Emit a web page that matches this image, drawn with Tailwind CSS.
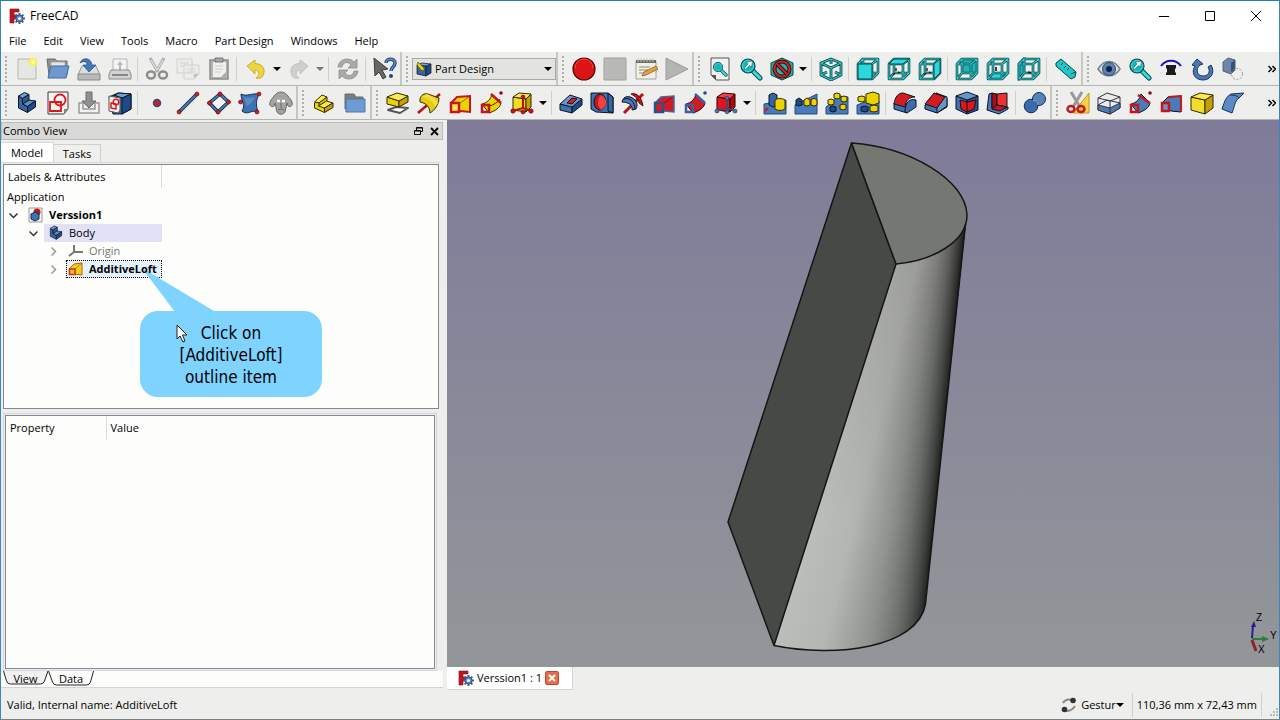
<!DOCTYPE html>
<html lang="en">
<head>
    <meta charset="UTF-8">
    <meta name="viewport" content="width=device-width, initial-scale=1.0">
    <title>FreeCAD</title>
    <script src="https://cdn.jsdelivr.net/npm/@tailwindcss/browser@4"></script>
</head>
<body class="h-screen flex flex-col overflow-hidden bg-[#eeefed] border border-t-[#1883b7] border-x-[#3c86b8] border-b-[#7d8083] text-black text-[11px] leading-4 font-['Open_Sans','Noto_Sans',sans-serif]">

    <!-- Shared shapes -->
    <svg class="hidden" aria-hidden="true">
        <symbol id="logo" viewBox="0 0 16 16">
            <path d="M1 1h9v3H5v3h4v3H5v5H1z" fill="#c4161c" stroke="#7c0c10" stroke-width=".6"/>
            <path d="M10.500 5v11M5 10.500h11M6.600 6.600l7.800 7.800M14.400 6.600l-7.800 7.800" stroke="#3d5f92" stroke-width="2"/>
            <circle cx="10.500" cy="10.500" r="3.600" fill="#5b82ba" stroke="#34558a"/>
            <circle cx="10.500" cy="10.500" r="1.600" fill="#fff"/>
        </symbol>
        <symbol id="frame" viewBox="0 0 24 24">
            <g fill="none" stroke-linejoin="round">
                <path d="M2 7h14v15H2zM7 2h15v14H7zM2 7l5-5M16 7l6-5M16 22l6-6M2 22l5-6" stroke="#0a4648" stroke-width="2.600"/>
                <path d="M2 7h14v15H2zM7 2h15v14H7zM2 7l5-5M16 7l6-5M16 22l6-6M2 22l5-6" stroke="#35c9cb" stroke-width="1.100"/>
            </g>
        </symbol>
        <symbol id="body" viewBox="0 0 24 24">
            <g stroke="#0b1521" stroke-linejoin="round">
                <path d="M3.500 5l4 2.500V13l5 2.500v6l-9-4.500z" fill="#3465a4"/>
                <path d="M3.500 5l6-3.500 4.500 2-6.500 4z" fill="#729fcf"/>
                <path d="M7.500 7.500l6.500-4V9l-6.500 4z" fill="#2d5c9a"/>
                <path d="M7.500 13L14 9l6.500 1-8 5.500z" fill="#5c8cc6"/>
                <path d="M12.500 15.500l8-5.500v6l-8 5.500z" fill="#204a87"/>
            </g>
        </symbol>
        <symbol id="ybody" viewBox="0 0 24 24">
            <g stroke="#302b00" stroke-linejoin="round">
                <path d="M2.500 12l4-1.500 1 3 5 2.500v5.500l-10-4.500z" fill="#edd400"/>
                <path d="M2.500 11L10 4l5 2-7.500 6z" fill="#fce94f"/>
                <path d="M7 12l8-6v4.500l-8 5z" fill="#d9bf00"/>
                <path d="M6.500 15l8-5 6.500 2-8.500 5z" fill="#fce94f"/>
                <path d="M12.500 17l8.500-5v4.500l-8.500 5z" fill="#c4a000"/>
            </g>
        </symbol>
        <symbol id="zoomglass" viewBox="0 0 24 24">
            <path d="M14 14l7 7" stroke="#0a4648" stroke-width="5" stroke-linecap="round"/>
            <path d="M14 14l7 7" stroke="#34e0e2" stroke-width="3" stroke-linecap="round"/>
            <circle cx="9" cy="9" r="7" fill="#16b5b7" stroke="#0a4648" stroke-width="1.200"/>
            <circle cx="9" cy="9" r="5.500" fill="none" stroke="#34e0e2"/>
        </symbol>
        <symbol id="arrowglass" viewBox="0 0 24 24">
            <use href="#zoomglass"/>
            <path d="M5 13l1-3 3-3-1.500-2 6-1-1 6-2-1.500-3 3z" fill="#fff" stroke="#0a4648" stroke-width=".5"/>
        </symbol>
        <symbol id="undoarrow" viewBox="0 0 24 24">
            <path d="M3 9l8-6v3.500c8 0 11 6 8 12-1 3-4 3-7 2.500 4-2 4-8-1-8v4z" fill="currentColor" stroke-width=".8"/>
        </symbol>
    </svg>

    <header>
        <div class="flex items-center justify-between bg-white h-[29px]">
            <div class="flex items-center gap-[5px] pl-2 text-[12px]">
                <svg class="size-4"><use href="#logo"/></svg>
                <h1>FreeCAD</h1>
            </div>
            <div class="flex [&>button]:w-[46px] [&>button]:h-7 [&>button]:grid [&>button]:place-items-center [&_svg]:size-3">
                <button aria-label="Minimize"><svg viewBox="0 0 12 12"><path d="M1 6.500h10" stroke="#000"/></svg></button>
                <button aria-label="Maximize"><svg viewBox="0 0 12 12"><path d="M1.500 1.500h9v9h-9z" fill="none" stroke="#000"/></svg></button>
                <button aria-label="Close"><svg viewBox="0 0 12 12"><path d="M1 1l10 10M11 1L1 11" stroke="#000"/></svg></button>
            </div>
        </div>
        <nav class="flex items-center gap-[17px] bg-white h-[22px] pl-2">
            <button>File</button>
            <button>Edit</button>
            <button>View</button>
            <button>Tools</button>
            <button>Macro</button>
            <button>Part Design</button>
            <button>Windows</button>
            <button>Help</button>
        </nav>
    </header>

    <!-- Toolbars: hr = separator, i = grip, data-menu = drop-down arrow -->
    <div class="flex flex-col shrink-0 [&>div]:flex [&>div]:h-[34px] [&>div]:border-b [&>div]:border-[#b4b5b3] [&_section]:flex [&_section]:items-center [&_section]:border-r-2 [&_section]:border-r-[#c6c7c5] [&_section>button]:w-[31px] [&_section>button]:h-8 [&_section>button]:grid [&_section>button]:place-items-center [&_section>button>svg]:size-6 [&_section>button[data-menu]]:w-3 [&_section>button[data-menu]>svg]:w-2 [&_section>button[data-menu]>svg]:h-1 [&_hr]:w-px [&_hr]:h-6 [&_hr]:ml-[2px] [&_hr]:mr-[3px] [&_hr]:border-0 [&_hr]:bg-[#d0d1cf] [&_i]:w-[2px] [&_i]:h-[26px] [&_i]:mx-1 [&_i]:bg-[repeating-linear-gradient(#b0b1af_0_2px,transparent_2px_4px)]">
        <div>
            <section aria-label="File">
                <i></i>
                <button aria-label="New"><svg viewBox="0 0 24 24"><path d="M3 2h18v20H3z" fill="#e6e6e2" stroke="#b5b6b2"/><circle cx="18" cy="5" r="4.500" fill="#f7ee6a"/><circle cx="18" cy="5" r="2" fill="#fffb9a"/></svg></button>
                <button aria-label="Open"><svg viewBox="0 0 24 24"><path d="M1 2h8l2 2h10v14H3z" fill="#8e908d" stroke="#6a6c69"/><path d="M5 5h14v8H5z" fill="#e6e6e6" stroke="#aaa"/><path d="M5 9h18l-3 12H2z" fill="#6d99cf" stroke="#3f6ca6"/></svg></button>
                <button aria-label="Save"><svg viewBox="0 0 24 24"><path d="M5 9h14l4 9H1z" fill="#dcdddb" stroke="#999"/><path d="M1 17h22v6H1z" fill="#b9bab8" stroke="#888"/><path d="M3 6c2-6 11-6 12 2h4l-7 7-6-7h4c0-4-4-4-7-2z" fill="#4377b5" stroke="#204a87" stroke-width=".7"/></svg></button>
                <button aria-label="Print"><svg viewBox="0 0 24 24"><path d="M5 2h14v13H5z" fill="#f3f3f3" stroke="#b5b5b5"/><path d="M12 4l3 4h-2v5h-2V8H9z" fill="#b8b8b8"/><path d="M3 13h18l2 4v5H1v-5z" fill="#d2d3d1" stroke="#8a8a8a"/><path d="M4 18h16" stroke="#6e6e6e" stroke-width="1.500"/></svg></button>
                <hr>
                <button aria-label="Cut"><svg viewBox="0 0 24 24" fill="none"><path d="M5 1l8 14M19 1l-8 14" stroke="#aeb0ad" stroke-width="3"/><path d="M6 3l6 10M18 3l-6 10" stroke="#ededed"/><ellipse cx="6" cy="18" rx="4" ry="3.500" stroke="#8d8f8c" stroke-width="2.500"/><ellipse cx="18" cy="18" rx="4" ry="3.500" stroke="#8d8f8c" stroke-width="2.500"/></svg></button>
                <button aria-label="Copy"><svg viewBox="0 0 24 24" fill="#ececea" stroke="#d2d3d1"><path d="M1 2h15v14H1zM8 8h15v9l-5 5H8z"/><path d="M11 12h9M11 15h9M4 6h9M4 9h3" /><path d="M23 17h-5v5z" fill="#bbb"/></svg></button>
                <button aria-label="Paste"><svg viewBox="0 0 24 24"><path d="M3 3h18v19H3z" fill="#b3b4b2" stroke="#8d8e8c" stroke-width="1.500"/><path d="M6 5h13v15H6z" fill="#efefed"/><path d="M8 1h8v4H8z" fill="#a6a7a5" stroke="#777"/><path d="M8 9h8M8 12h8M8 15h6" stroke="#ccc"/><path d="M19 15l-5 5h5z" fill="#aaa"/></svg></button>
                <hr>
                <button aria-label="Undo"><svg class="text-[#edd540]" stroke="#bfa21a"><use href="#undoarrow"/></svg></button>
                <button data-menu aria-label="Undo list"><svg viewBox="0 0 8 4"><path d="M0 0h8L4 4z"/></svg></button>
                <button aria-label="Redo"><svg class="text-[#cfd0ce] -scale-x-100" stroke="#b9bab8"><use href="#undoarrow"/></svg></button>
                <button data-menu aria-label="Redo list"><svg viewBox="0 0 8 4"><path d="M0 0h8L4 4z" fill="#777"/></svg></button>
                <hr>
                <button aria-label="Refresh"><svg viewBox="0 0 24 24" fill="#a9aba8" stroke="#8c8e8b" stroke-width=".8"><path d="M2 10C3 1 14 0 18 5l3-3v9h-9l3-3c-3-4-8-3-9 2z"/><path d="M22 14c-1 9-12 10-16 5l-3 3v-9h9l-3 3c3 4 8 3 9-2z"/></svg></button>
                <hr>
                <button aria-label="What's this?"><svg viewBox="0 0 24 24"><path d="M1 1l14 11-6 1 4 7-3 2-4-7-4 4z" fill="#666866" stroke="#3c3e3c"/><path d="M13 6c0-5 9-5 9 0 0 4-4 4-4 8" fill="none" stroke="#204a87" stroke-width="3.500"/><path d="M13 6c0-5 9-5 9 0 0 4-4 4-4 8" fill="none" stroke="#5c8cc6" stroke-width="1.500"/><circle cx="18" cy="19" r="2" fill="#204a87"/></svg></button>
            </section>
            <section aria-label="Workbench">
                <i></i>
                <label class="relative w-36">
                    <span class="sr-only">Workbench</span>
                    <select class="block w-full h-[22px] appearance-none border border-[#a9aaa8] bg-[#e3e4e2] pl-[22px] pr-4 py-0 leading-5">
                        <option>Part Design</option>
                    </select>
                    <svg class="absolute left-1 top-[3px] size-4 pointer-events-none" viewBox="0 0 16 16"><path d="M1 4l9 1v10l-9-2z" fill="#3465a4" stroke="#0b1521" stroke-width=".7"/><path d="M10 5l5-2v9l-5 3z" fill="#204a87" stroke="#0b1521" stroke-width=".7"/><path d="M1 4l5-2 9 1-5 2z" fill="#729fcf" stroke="#0b1521" stroke-width=".7"/><path d="M2 1l6 6v3L5 9 1 4z" fill="#edd400" stroke="#5a5000" stroke-width=".7"/></svg>
                    <svg class="absolute right-1 top-[9px] w-2 h-1 pointer-events-none" viewBox="0 0 8 4"><path d="M0 0h8L4 4z"/></svg>
                </label>
            </section>
            <section aria-label="Macro">
                <i></i>
                <button aria-label="Record macro"><svg viewBox="0 0 24 24"><circle cx="12" cy="12" r="11" fill="#dc1417" stroke="#5c0606" stroke-width="1.200"/><path d="M3 11a9 9 0 0118 0" fill="none" stroke="#f04a4a"/></svg></button>
                <button aria-label="Stop macro"><svg viewBox="0 0 24 24"><path d="M1 1h22v22H1z" fill="#b9bab8" stroke="#a0a19f"/></svg></button>
                <button aria-label="Edit macros"><svg viewBox="0 0 24 24"><path d="M2 4h20v18H2z" fill="#f2f0e4" stroke="#a3a19a"/><path d="M2 3h20v3H2z" fill="#6d6a60"/><path d="M4 1v4M7 1v4M10 1v4M13 1v4M16 1v4M19 1v4" stroke="#c9c7bf"/><path d="M5 10h11M5 13h9M5 16h6" stroke="#8a8982"/><path d="M22 9l2 3-12 6-4 1 2-4z" fill="#e8a33d" stroke="#7a4a10" stroke-width=".7"/></svg></button>
                <button aria-label="Run macro"><svg viewBox="0 0 24 24"><path d="M1 1l22 11L1 23z" fill="#b4b5b3" stroke="#9c9d9b"/></svg></button>
            </section>
            <section aria-label="View">
                <i></i>
                <button aria-label="Fit all"><svg viewBox="0 0 24 24"><path d="M3 1h18v22H8l-5-5z" fill="#f2f2f0" stroke="#555"/><path d="M3 18h5v5z" fill="#555"/><use href="#zoomglass" x="4" y="4" width="16" height="16"/></svg></button>
                <button aria-label="Fit selection"><svg viewBox="0 0 24 24"><use href="#arrowglass"/></svg></button>
                <button aria-label="Draw style"><svg viewBox="0 0 24 24"><path d="M12 1l11 5v12l-11 5-11-5V6z" fill="#16b5b7" stroke="#0a4648"/><circle cx="12" cy="12" r="7.500" fill="none" stroke="#3a0a0a" stroke-width="4"/><circle cx="12" cy="12" r="7.500" fill="none" stroke="#cc2222" stroke-width="2.200"/><path d="M7 7l10 10" stroke="#3a0a0a" stroke-width="4"/><path d="M7 7l10 10" stroke="#cc2222" stroke-width="2.200"/></svg></button>
                <button data-menu aria-label="Draw styles"><svg viewBox="0 0 8 4"><path d="M0 0h8L4 4z"/></svg></button>
                <hr>
                <button aria-label="Isometric"><svg viewBox="0 0 24 24" fill="none" stroke-linejoin="round"><path d="M12 2l10 4v12l-10 5-10-5V6zM2 6l10 5 10-5M12 11v12M12 2v5M2 18l6-3M22 18l-6-3" stroke="#0a4648" stroke-width="2.800"/><path d="M12 2l10 4v12l-10 5-10-5V6zM2 6l10 5 10-5M12 11v12M12 2v5M2 18l6-3M22 18l-6-3" stroke="#35c9cb" stroke-width="1.100"/></svg></button>
                <hr>
                <button aria-label="Front"><svg viewBox="0 0 24 24"><use href="#frame"/><path d="M2 7h14v15H2z" fill="#2bd9dc" stroke="#0a4648"/></svg></button>
                <button aria-label="Top"><svg viewBox="0 0 24 24"><use href="#frame"/><path d="M2 7l5-5h15l-6 5z" fill="#2bd9dc" stroke="#0a4648"/><path d="M9 11v3M8 16l-2 2M11 15l2 1" stroke="#111" stroke-width="1.300"/></svg></button>
                <button aria-label="Right"><svg viewBox="0 0 24 24"><use href="#frame"/><path d="M16 7l6-5v14l-6 6z" fill="#2bd9dc" stroke="#0a4648"/><path d="M9 11v3M8 16l-2 2M11 15l2 1" stroke="#111" stroke-width="1.300"/></svg></button>
                <hr>
                <button aria-label="Rear"><svg viewBox="0 0 24 24"><path d="M7 3h14v13H7z" fill="#1cb6b9"/><use href="#frame"/></svg></button>
                <button aria-label="Bottom"><svg viewBox="0 0 24 24"><path d="M2 22l5-6h15l-6 6z" fill="#2bd9dc"/><use href="#frame"/><path d="M10 10v4" stroke="#111" stroke-width="1.600"/></svg></button>
                <button aria-label="Left"><svg viewBox="0 0 24 24"><path d="M2 7l5-5v14l-5 6z" fill="#1cb6b9" stroke="#1cb6b9" stroke-width="3"/><use href="#frame"/><path d="M11 15l3 1" stroke="#111" stroke-width="1.600"/></svg></button>
                <hr>
                <button aria-label="Measure"><svg viewBox="0 0 24 24"><path d="M2 6l5-4 15 13-1 5-4 2L2 9z" fill="#22c7ca" stroke="#0a4648"/><path d="M17 17l5-2M7 8l2-2M10 11l2-2M13 13l2-2" stroke="#0a4648"/></svg></button>
            </section>
            <section class="flex-1 pr-px !border-r-0" aria-label="Visibility">
                <i></i>
                <button aria-label="Toggle visibility"><svg viewBox="0 0 24 24"><path d="M1 12c6-10 16-10 22 0-6 9-16 9-22 0z" fill="#dfe3e6" stroke="#7c8084" stroke-width="1.500"/><circle cx="12" cy="12" r="6.500" fill="#5b82b4" stroke="#2b4a78"/><circle cx="12" cy="12" r="3" fill="#142238"/></svg></button>
                <button aria-label="Zoom to selection"><svg viewBox="0 0 24 24"><use href="#arrowglass"/></svg></button>
                <button aria-label="Turntable"><svg viewBox="0 0 24 24"><path d="M2 9c5-7 15-7 20 0" fill="none" stroke="#1a12b8" stroke-width="2"/><path d="M7 8h10v3l-1 1v3l1 1v2H7v-2l1-1v-3l-1-1z" fill="#1c1c1c"/></svg></button>
                <button aria-label="Rotate"><svg viewBox="0 0 24 24"><path d="M2 8l5-6 6 5-3 1c-5 4-3 11 3 11 5 0 8-4 5-9l3-2c5 8-1 15-8 15C4 23 1 15 5 9z" fill="#4a78b4" stroke="#1a355e"/></svg></button>
                <button aria-label="Clipping"><svg viewBox="0 0 24 24"><path d="M2 5l5-4 7 2v10l-4 4-8-3z" fill="#6b86ad" stroke="#59626e"/><path d="M10 6l4-3v10l-4 4z" fill="#39506f"/><circle cx="16" cy="17" r="5.500" fill="none" stroke="#999" stroke-dasharray="2 1.500"/></svg></button>
                <button class="ml-auto !w-3" aria-label="More"><svg class="!size-2" viewBox="0 0 8 8"><path d="M.500 1l3 3-3 3M4.500 1l3 3-3 3" fill="none" stroke="#000" stroke-width="1.500"/></svg></button>
            </section>
        </div>
        <div>
            <section aria-label="Part Design Helper">
                <i></i>
                <button aria-label="Create body"><svg viewBox="0 0 24 24"><use href="#body"/></svg></button>
                <button aria-label="Create sketch"><svg viewBox="0 0 24 24"><path d="M2 1h20v17l-4 5H2z" fill="#f3f3f1" stroke="#3a3a3a"/><path d="M22 18h-4v5z" fill="#888"/><g fill="none" stroke="#e0161a" stroke-width="1.800"><path d="M4 11h11v9H4z"/><circle cx="14" cy="9" r="5.500"/></g></svg></button>
                <button aria-label="Edit sketch"><svg viewBox="0 0 24 24"><path d="M2 12h4v6h12v-6h4v10H2z" fill="#f2f2f2" stroke="#999" stroke-width="1.500"/><path d="M9 1h6v9h4l-7 7-7-7h4z" fill="#8e908d" stroke="#6a6c69"/></svg></button>
                <button aria-label="Map sketch"><svg viewBox="0 0 24 24" stroke-linejoin="round"><path d="M1 6l9-4 13 1v15l-9 5H5z" fill="#3465a4" stroke="#0b1521"/><path d="M14 7l9-4v15l-9 5z" fill="#204a87" stroke="#0b1521"/><path d="M6 4l5-2 12 1-9 4z" fill="#729fcf" stroke="#0b1521"/><path d="M1 5l11 2v12l-2 3-9-2z" fill="#f3f3f1" stroke="#555"/><g fill="none" stroke="#e0161a" stroke-width="1.500"><path d="M3 12l5 1v5l-5-1z"/><circle cx="8" cy="11" r="2.800"/></g></svg></button>
                <hr>
                <button aria-label="Datum point"><svg viewBox="0 0 24 24"><circle cx="12" cy="12" r="3.500" fill="#d41c20" stroke="#29508a" stroke-width="1.500"/></svg></button>
                <button aria-label="Datum line"><svg viewBox="0 0 24 24"><path d="M3 21L21 3" stroke="#122440" stroke-width="3.500"/><path d="M3 21L21 3" stroke="#4a7ab8" stroke-width="1.800"/><g fill="#d41c20" stroke="#6a0808" stroke-width=".6"><circle cx="3" cy="21" r="2"/><circle cx="21" cy="3" r="2"/></g></svg></button>
                <button aria-label="Datum plane"><svg viewBox="0 0 24 24"><path d="M13 3l8.500 8-10.500 10-8.500-9z" fill="#f5f6f8" stroke="#122440" stroke-width="3.500"/><path d="M13 3l8.500 8-10.500 10-8.500-9z" fill="none" stroke="#4a7ab8" stroke-width="1.800"/><g fill="#d41c20" stroke="#6a0808" stroke-width=".6"><circle cx="13" cy="3" r="2"/><circle cx="21.500" cy="11" r="2"/><circle cx="11" cy="21" r="2"/><circle cx="2.500" cy="12" r="2"/></g></svg></button>
                <button aria-label="Shape binder"><svg viewBox="0 0 24 24"><path d="M3 3c6 3 10-1 18 0-2 5-4 9-1 18-7-3-10 4-16-1 4-6-1-10-1-17z" fill="#3f72b0" stroke="#142e55"/><path d="M6 6c4 2 8 0 11 0-2 5-5 8-9 9 0-4-1-6-2-9z" fill="#5a8ac4"/><g fill="#d41c20" stroke="#6a0808" stroke-width=".6"><circle cx="21" cy="3" r="2"/><circle cx="2.500" cy="11" r="2"/><circle cx="19" cy="21" r="2"/></g></svg></button>
                <button aria-label="Clone"><svg viewBox="0 0 24 24" stroke="#6b6b69"><path d="M6 4c3-4 9-4 12 0l4 5c3 5 0 8-3 6l-1-3-2 9c-2 3-6 3-8 0l-2-9-1 3c-3 2-6-1-3-6z" fill="#a3a5a2"/><path d="M8 10h3M13 10h3" stroke="#fff" stroke-width="2.500"/><path d="M12 12v5M9 19l3-1 3 1" fill="none"/></svg></button>
            </section>
            <section aria-label="Structure">
                <i></i>
                <button aria-label="Part"><svg viewBox="0 0 24 24"><use href="#ybody"/></svg></button>
                <button aria-label="Group"><svg viewBox="0 0 24 24"><path d="M2 3h9l2 3h7v12H2z" fill="#7c7e7c" stroke="#6b6d6a"/><path d="M3 8h19v13H3z" fill="#6d9bd2" stroke="#4a76ae"/></svg></button>
            </section>
            <section aria-label="Part Design Modeling">
                <i></i>
                <button aria-label="Pad"><svg viewBox="0 0 24 24" stroke-linejoin="round"><path d="M2 19l8-3 12 1-8 5z" fill="#fff" stroke="#555" stroke-width="2"/><path d="M1 6v7l12 3v-6z" fill="#edd400" stroke="#302b00"/><path d="M13 10l9-5v6l-9 5z" fill="#c4a000" stroke="#302b00"/><path d="M1 6l10-4 11 3-9 5z" fill="#fce94f" stroke="#302b00"/></svg></button>
                <button aria-label="Revolution"><svg viewBox="0 0 24 24"><path d="M1 22L23 3" stroke="#b31217" stroke-width="2.500"/><path d="M3 8c1-4 4-6 8-5l11 4c0 6-4 12-9 15 0-6-4-10-10-11z" fill="#e3cb10" stroke="#302b00"/><path d="M5 6c6 1 12 5 13 10l3-4c-2-4-6-7-11-9z" fill="#f4df3a"/></svg></button>
                <button aria-label="Additive loft"><svg viewBox="0 0 24 24"><path d="M3 12l6-6 13-1v16l-10-1z" fill="#edd400"/><path d="M11 13l11-8" stroke="#8a7800"/><path d="M3 12l6-6 13-1v16l-10-1" fill="none" stroke="#c4161c" stroke-width="2"/><path d="M3 12h8v9H3z" fill="#fce94f" stroke="#c4161c" stroke-width="2.500"/></svg></button>
                <button aria-label="Additive pipe"><svg viewBox="0 0 24 24"><path d="M3 13c5-1 9-5 10-10l9 9c-1 5-6 8-12 10z" fill="#edd400" stroke="#302b00"/><path d="M10 15c5-1 9-4 11-7" fill="none" stroke="#302b00"/><path d="M3 14h7v7H3zM12 3l10 9" fill="none" stroke="#c4161c" stroke-width="2.500"/><circle cx="22" cy="2" r="1.800" fill="#8a0f14"/></svg></button>
                <button aria-label="Additive primitive"><svg viewBox="0 0 24 24"><path d="M3 6l13 2v13L3 19z" fill="#f2dd20" stroke="#302b00"/><path d="M16 8l5-5v13l-5 5z" fill="#c4a000" stroke="#302b00"/><path d="M3 6l6-4 12 1-5 5z" fill="#fce94f" stroke="#302b00"/><path d="M13 6v11L3 20M13 17l8 3" fill="none" stroke="#b31217" stroke-width="2"/><g fill="#c4161c" stroke="#5c0606" stroke-width=".6"><circle cx="13" cy="6" r="2"/><circle cx="3" cy="20" r="2.200"/><circle cx="13" cy="21" r="2"/><circle cx="21" cy="20" r="2.200"/></g></svg></button>
                <button data-menu aria-label="Additive primitives"><svg viewBox="0 0 8 4"><path d="M0 0h8L4 4z"/></svg></button>
                <hr>
                <button aria-label="Pocket"><svg viewBox="0 0 24 24" stroke="#0b1521" stroke-linejoin="round"><path d="M1 13v6l12 3v-6z" fill="#3f72b0"/><path d="M13 16l10-8v6l-10 8z" fill="#204a87"/><path d="M1 13L11 4l12 4-10 8z" fill="#6795cb"/><path d="M8 12l5-5 5 1-5 5z" fill="#e0161a"/></svg></button>
                <button aria-label="Hole"><svg viewBox="0 0 24 24" stroke="#0b1521"><path d="M1 2h17l5 4v16l-17-1-5-3z" fill="#3f72b0"/><path d="M18 2l5 4v16l-5-2z" fill="#3465a4"/><ellipse cx="10" cy="11" rx="6" ry="8" fill="#c4161c"/><path d="M11 4c7 3 7 12 0 15-4-4-4-11 0-15z" fill="#ef4343" stroke="none"/></svg></button>
                <button aria-label="Groove"><svg viewBox="0 0 24 24"><path d="M3 22L22 3" stroke="#b31217" stroke-width="3"/><path d="M10 3c6-2 11 4 12 12l-4-3c-1-4-3-6-8-9z" fill="#c4161c" stroke="#300" stroke-width=".8"/><path d="M1 11C2 5 8 4 13 8c3 3 4 6 2 10l-4 1c1-5-4-8-10-8z" fill="#4a7ab8" stroke="#0b1521"/><path d="M3 8c6-2 11 3 11 10" fill="none" stroke="#0b1521"/></svg></button>
                <button aria-label="Subtractive loft"><svg viewBox="0 0 24 24"><path d="M3 12l6-6 13-1v16l-10-1z" fill="#d41c20"/><path d="M11 13l11-8" stroke="#7a0c10"/><path d="M3 12l6-6 13-1v16l-10-1" fill="none" stroke="#4668a0" stroke-width="1.500"/><path d="M3 12h8v9H3z" fill="#d41c20" stroke="#29508a" stroke-width="2.500"/></svg></button>
                <button aria-label="Subtractive pipe"><svg viewBox="0 0 24 24"><path d="M3 13c5-1 9-5 10-10l9 9c-1 5-6 8-12 10z" fill="#d41c20" stroke="#300"/><path d="M3 14h7v7H3zM12 3l10 9" fill="none" stroke="#3a62a0" stroke-width="2.500"/><circle cx="22" cy="2" r="1.800" fill="#29508a"/></svg></button>
                <button aria-label="Subtractive primitive"><svg viewBox="0 0 24 24"><path d="M3 6l13 2v13L3 19z" fill="#e0161a" stroke="#300"/><path d="M16 8l5-5v13l-5 5z" fill="#a80f14" stroke="#300"/><path d="M3 6l6-4 12 1-5 5z" fill="#ef4343" stroke="#300"/><path d="M13 8v9L3 20M13 17l8 3" fill="none" stroke="#29508a" stroke-width="1.500"/><g fill="#4a7ab8" stroke="#142e55" stroke-width=".6"><circle cx="13" cy="7" r="1.800"/><circle cx="3" cy="20" r="2"/><circle cx="13" cy="21" r="1.800"/><circle cx="21" cy="20" r="2"/></g></svg></button>
                <button data-menu aria-label="Subtractive primitives"><svg viewBox="0 0 8 4"><path d="M0 0h8L4 4z"/></svg></button>
                <hr>
                <button aria-label="Mirrored"><svg viewBox="0 0 24 24"><path d="M1 13l22-4v14H1z" fill="#4a7ab8" stroke="#204a87"/><path d="M6 4l4-2 4 2v10l-4 2-4-2z" fill="#3465a4" stroke="#0b1521"/><path d="M12 9c3-2 7-2 10 0v9c-3 2-7 2-10 0z" fill="#edd400" stroke="#302b00"/><path d="M2 20l3-3" stroke="#c4161c" stroke-width="2"/></svg></button>
                <button aria-label="Linear pattern"><svg viewBox="0 0 24 24"><path d="M1 14L23 3v20H1z" fill="#4a7ab8" stroke="#204a87"/><path d="M2 9l3-2 3 2v5l-3 1-3-1z" fill="#204a87" stroke="#0b1521"/><path d="M10 9l3-2 3 2v5l-3 1-3-1zM17 9l3-2 3 2v5l-3 1-3-1z" fill="#edd400" stroke="#302b00"/></svg></button>
                <button aria-label="Polar pattern"><svg viewBox="0 0 24 24"><path d="M1 16L14 5l9 1v17H1z" fill="#4a7ab8" stroke="#204a87"/><g fill="#edd400" stroke="#302b00"><path d="M9 3l3-1 3 1v4l-3 1-3-1zM16 6l3-1 3 1v4l-3 1-3-1zM15 14l3-1 3 1v4l-3 1-3-1zM3 9l3-1 3 1v4l-3 1-3-1z"/></g><path d="M5 16l3-1 3 1v4l-3 1-3-1z" fill="#204a87" stroke="#0b1521"/></svg></button>
                <button aria-label="Multi transform"><svg viewBox="0 0 24 24"><path d="M1 14L14 9l9 1v13H1z" fill="#4a7ab8" stroke="#204a87"/><g fill="#edd400" stroke="#302b00"><path d="M10 3l7-2 6 2v9l-6 2-7-2zM2 6l4-1 3 1v4l-3 1-4-1zM14 15l4-1 4 1v5l-4 1-4-1z"/></g><path d="M5 16l4-1 3 1v4l-3 1-4-1z" fill="#204a87" stroke="#0b1521"/></svg></button>
                <hr>
                <button aria-label="Fillet"><svg viewBox="0 0 24 24" stroke="#0b1521" stroke-linejoin="round"><path d="M1 12v6l13 4v-9z" fill="#3f72b0"/><path d="M12 21c0-9 4-14 11-12v7l-9 6z" fill="#3f6cab"/><path d="M1 13C2 6 5 2 10 2l12 4c-6 0-9 3-10 10z" fill="#d41c20"/></svg></button>
                <button aria-label="Chamfer"><svg viewBox="0 0 24 24" stroke="#0b1521" stroke-linejoin="round"><path d="M1 14v4l12 4 10-6V8L12 3z" fill="#3f72b0"/><path d="M12 2l11 4v9l-10 7v-5l7-11z" fill="#6795cb"/><path d="M1 13L10 2l11 4-8 11z" fill="#d41c20"/></svg></button>
                <button aria-label="Draft"><svg viewBox="0 0 24 24" stroke="#0b1521" stroke-linejoin="round"><path d="M1 5v13l11 5V9z" fill="#3f72b0"/><path d="M12 9l11-4v14l-11 4z" fill="#29508a"/><path d="M1 5l11-4 11 4-11 4z" fill="#6795cb"/><path d="M5 9l7 2 9-2-2 9-7 3-6-3z" fill="#e0161a"/><path d="M12 11v10"/></svg></button>
                <button aria-label="Thickness"><svg viewBox="0 0 24 24" stroke="#0b1521" stroke-linejoin="round"><path d="M3 3l3-1v15l8 2 8-3v2l-9 5-12-4z" fill="#4a7ab8"/><path d="M6 2l5 1v11l-5 4z" fill="#a80f14"/><path d="M11 3l10-1v14l-10-2z" fill="#ef3030"/><path d="M6 18l5-4 10 2-7 4z" fill="#c4161c"/></svg></button>
                <hr>
                <button aria-label="Boolean"><svg viewBox="0 0 24 24" stroke="#142e55"><circle cx="16" cy="8" r="6.500" fill="#5583bd"/><circle cx="8" cy="15" r="6.800" fill="#3a6aaa"/><path d="M10 9c3 0 5 3 5 5" stroke="#9bbbe2" fill="none"/></svg></button>
            </section>
            <section class="flex-1 pr-px !border-r-0" aria-label="Part">
                <i></i>
                <button aria-label="Section cut"><svg viewBox="0 0 24 24"><path d="M23 2v20H7z" fill="#f3d24a" stroke="#c09a1a"/><path d="M5 1l9 15M16 1L7 16" stroke="#999" stroke-width="3"/><g fill="none" stroke="#c4161c" stroke-width="2.500"><ellipse cx="5" cy="18" rx="3.500" ry="3"/><ellipse cx="15" cy="18" rx="3.500" ry="3"/></g></svg></button>
                <button aria-label="Cross-sections"><svg viewBox="0 0 24 24" fill="#e9ecef" stroke="#333"><path d="M1 7l9-5 13 4v11l-10 6-12-4z"/><path d="M1 14l12 3 10-5v5l-10 6-12-4z" fill="#4a7ab8"/><path d="M1 7l12 3 10-4M13 10v13M1 14l9-5 13 3" fill="none"/></svg></button>
                <button aria-label="Sweep"><svg viewBox="0 0 24 24"><path d="M3 13c5-1 9-5 10-10l9 9c-1 5-6 8-12 10z" fill="#4a7ab8" stroke="#0b1521"/><path d="M3 14h7v7H3zM10 4l12 8" fill="none" stroke="#c4161c" stroke-width="2.500"/><circle cx="22" cy="2" r="1.800" fill="#8a0f14"/></svg></button>
                <button aria-label="Loft"><svg viewBox="0 0 24 24"><path d="M3 12l6-6 13-1v16l-10-1z" fill="#4a7ab8" stroke="#0b1521"/><path d="M9 6l13-1v16" fill="none" stroke="#c4161c" stroke-width="2"/><path d="M3 12h7v8H3z" fill="#6795cb" stroke="#c4161c" stroke-width="2.500"/></svg></button>
                <button aria-label="Box"><svg viewBox="0 0 24 24" stroke="#302b00" stroke-linejoin="round"><path d="M1 6l14 3v14L1 19z" fill="#f0de2a"/><path d="M15 9l8-5v13l-8 6z" fill="#c4a000"/><path d="M1 6l9-4 13 2-8 5z" fill="#fce94f"/></svg></button>
                <button aria-label="Face"><svg viewBox="0 0 24 24"><path d="M10 3l13-1-5 5c-5 4-4 8-7 15L1 18C4 9 5 6 10 3z" fill="#5b8bc4" stroke="#142e55"/><path d="M9 4c4 0 8 1 9 3" fill="none" stroke="#142e55"/></svg></button>
                <button class="ml-auto !w-3" aria-label="More"><svg class="!size-2" viewBox="0 0 8 8"><path d="M.500 1l3 3-3 3M4.500 1l3 3-3 3" fill="none" stroke="#000" stroke-width="1.500"/></svg></button>
            </section>
        </div>
    </div>

    <main class="flex-1 min-h-0 flex">
        <aside class="relative w-[446px] shrink-0 flex flex-col pt-[2px]">
            <div class="flex items-center justify-between w-[442px] h-[18px] bg-[#d9dad8] border border-[#bcbdbb] pl-px pr-[2px]">
                <h2>Combo View</h2>
                <div class="flex gap-1 [&>button]:size-3 [&>button]:grid [&>button]:place-items-center">
                    <button aria-label="Float"><svg class="size-[9px]" viewBox="0 0 9 9" fill="none" stroke="#000"><path d="M2.500 3V.500h6v4H6.500M2.500 1h6M.500 3.500h6v4h-6zM.500 4h6"/></svg></button>
                    <button aria-label="Close panel"><svg class="size-[9px]" viewBox="0 0 9 9"><path d="M1 1l7 7M8 1L1 8" stroke="#000" stroke-width="1.800"/></svg></button>
                </div>
            </div>
            <div class="flex items-end h-[23px] border-b border-[#d9dad8] mr-[7px]" role="tablist">
                <button class="w-[53px] h-5 bg-white border-t border-r border-[#d9dad8]" role="tab" aria-selected="true">Model</button>
                <button class="w-[47px] h-[18px] bg-[#f0f1ef] border-t border-r border-[#d0d1cf]" role="tab">Tasks</button>
            </div>

            <div class="h-[245px] shrink-0 ml-[2px] mr-2 mt-px border border-[#85888c] bg-[#fdfefc]">
                <div class="flex items-center w-[158px] h-[23px] pl-1 border-r border-[#dcdddb]">Labels &amp; Attributes</div>
                <ul class="w-[158px] [&>li]:flex [&>li]:items-center [&>li]:h-[18px] [&>li>button]:w-[19px] [&>li>button]:mr-px [&>li>button]:shrink-0 [&>li>button]:grid [&>li>button]:place-items-center [&>li>span]:flex [&>li>span]:flex-1 [&>li>span]:items-center [&>li>span]:gap-[5px] [&>li>span]:h-full [&>li>span]:pl-1 [&>li>span>svg]:size-4" role="tree">
                    <li class="pl-[3px]">Application</li>
                    <li>
                        <button aria-label="Collapse Verssion1"><svg class="size-[9px]" viewBox="0 0 9 9"><path d="M.500 2.500l4 4 4-4" fill="none" stroke="#333" stroke-width="1.500"/></svg></button>
                        <span><svg viewBox="0 0 16 16"><path d="M1 1h13v14H1z" fill="#f5f5f3" stroke="#999"/><circle cx="9" cy="5" r="3.500" fill="#c4161c"/><path d="M3 7l4-2 4 2v5l-4 2-4-2z" fill="#3f72b0" stroke="#142e55"/></svg><b>Verssion1</b></span>
                    </li>
                    <li class="pl-5">
                        <button aria-label="Collapse Body"><svg class="size-[9px]" viewBox="0 0 9 9"><path d="M.500 2.500l4 4 4-4" fill="none" stroke="#333" stroke-width="1.500"/></svg></button>
                        <span class="bg-[#e2e1f8]"><svg><use href="#body"/></svg>Body</span>
                    </li>
                    <li class="pl-10 text-[#777]">
                        <button aria-label="Expand Origin"><svg class="size-[9px]" viewBox="0 0 9 9"><path d="M2.500.500l4 4-4 4" fill="none" stroke="#999" stroke-width="1.500"/></svg></button>
                        <span><svg viewBox="0 0 16 16"><path d="M6 2v7h9M6 9l-5 4" fill="none" stroke="#777" stroke-width="2"/></svg>Origin</span>
                    </li>
                    <li class="pl-10">
                        <button aria-label="Expand AdditiveLoft"><svg class="size-[9px]" viewBox="0 0 9 9"><path d="M2.500.500l4 4-4 4" fill="none" stroke="#999" stroke-width="1.500"/></svg></button>
                        <span class="relative"><svg class="z-10" viewBox="0 0 16 16"><path d="M1 8l5-5 8-1v12l-7-1z" fill="#f2cf10" stroke="#c8501a"/><path d="M7 8l7-6" stroke="#8a7800" stroke-width=".7"/><path d="M1.500 8H7v5.500H1.500z" fill="#f2cf10" stroke="#d0301a" stroke-width="1.600"/></svg><b class="z-10">AdditiveLoft</b>
                            <span class="absolute inset-y-0 left-[2px] right-0 border border-dotted border-black bg-[#e5f1fb]"></span>
                        </span>
                    </li>
                </ul>
            </div>

            <div class="flex-1 min-h-0 mt-[4px] ml-[2px] mr-[10px] p-px border border-[#d4d5e0]">
                <div class="h-full border border-[#85888c] bg-[#fdfefc]">
                    <table class="w-full">
                        <thead>
                            <tr class="h-6 text-left">
                                <th class="w-[100px] pl-1 font-normal border-r border-[#dcdddb]">Property</th>
                                <th class="pl-1 font-normal">Value</th>
                            </tr>
                        </thead>
                    </table>
                </div>
            </div>
            <div class="flex h-[17px] mr-1 pl-[2px] bg-[#fdfefc] border-b border-[#d4d5d3]" role="tablist">
                <button class="relative w-[45px] h-[14px] leading-[13px]" role="tab"><svg class="absolute inset-0 size-full" viewBox="0 0 45 14" fill="#f1f2f0" stroke="#222"><path d="M.500 0l3 10q1 3 4 3h30q3 0 4-3L45 0"/></svg><span class="relative">View</span></button>
                <button class="relative w-[46px] h-[15px] leading-[15px]" role="tab" aria-selected="true"><svg class="absolute inset-0 size-full" viewBox="0 0 46 15" fill="#fdfefc" stroke="#222"><path d="M.500 0l4 11q1 3 4 3h30q3 0 4-3L45.500 0"/></svg><span class="relative">Data</span></button>
            </div>
            <div class="h-[2px]"></div>

            <!-- Hint balloon with the mouse pointer -->
            <div class="absolute left-[139px] top-[191px] w-[182px] h-[86px] pt-[2px] rounded-[18px] bg-[#7fd3ff] flex items-center justify-center text-center text-[17px] leading-[22px] font-['DejaVu_Sans_Condensed','DejaVu_Sans',sans-serif]">
                <svg class="absolute left-[2px] -top-[43px] w-[72px] h-11" viewBox="0 0 72 44"><path d="M0 0l33 44h39v-1z" fill="#7fd3ff"/></svg>
                <p>Click on<br>[AdditiveLoft]<br>outline item</p>
                <svg class="absolute left-9 top-[13px] w-3 h-[19px]" viewBox="0 0 12 19"><path d="M1 1v14l3-3 3 6 2-1-2.500-6H11z" fill="#fff" stroke="#222"/></svg>
            </div>
        </aside>

        <div class="flex-1 min-w-0 flex flex-col">
            <div class="flex-1 min-h-0 bg-linear-to-b from-[#7f7b99] to-[#939699]">
                <svg class="size-full" viewBox="447 120 832 547" role="img" aria-label="3D view">
                    <defs>
                        <linearGradient id="shade" x1="0" y1="0" x2="0" y2="1">
                            <stop offset="0" stop-opacity=".16"/>
                            <stop offset=".7" stop-opacity="0"/>
                        </linearGradient>
                    </defs>
                    <g id="side"></g>
                    <path d="M896 264C925 262 958 246 966 222L925.500 604C918 648 835 658 774 645.500z" fill="url(#shade)"/>
                    <g stroke="#151515" stroke-width="1.500" stroke-linejoin="round">
                        <path d="M851.500 143L896 264 774 645.500 728 522z" fill="#474946"/>
                        <path d="M851.500 143C910 147 966 180 967 215 967 242 932 261 896 264z" fill="#757773"/>
                        <path d="M965.500 224L925.500 604C918 648 835 658 774 645.500" fill="none"/>
                    </g>
                    <g fill="none" stroke-width="2">
                        <path d="M1252 638l1-13" stroke="#23208a"/><path d="M1251 627l3-6 2 6z" fill="#23208a" stroke="none"/>
                        <path d="M1252 639h12" stroke="#2e7d3a"/><path d="M1262 636l7 3-7 3z" fill="#2e7d3a" stroke="none"/>
                        <path d="M1252 640l4 11" stroke="#8c2525" stroke-width="3"/>
                    </g>
                    <g class="font-['Liberation_Sans',sans-serif] text-[10px]"><text x="1256" y="621">Z</text><text x="1270" y="639">Y</text><text x="1258" y="653">X</text></g>
                </svg>
            </div>
            <div class="flex h-[23px]">
                <div class="flex items-center gap-[3px] pl-[11px] pr-[13px] bg-white border-r border-b border-[#d4d5d3]">
                    <svg class="size-4"><use href="#logo"/></svg>
                    <button>Verssion1 : 1</button>
                    <button class="grid place-items-center size-[14px] rounded-[2px] bg-[#e07050] border border-[#b9482c]" aria-label="Close Verssion1"><svg class="size-2" viewBox="0 0 8 8"><path d="M1 1l6 6M7 1L1 7" stroke="#fff" stroke-width="1.800"/></svg></button>
                </div>
            </div>
        </div>
    </main>

    <footer class="flex items-center justify-between h-[29px] shrink-0 pl-[6px]">
        <p>Valid, Internal name: AdditiveLoft</p>
        <div class="flex items-center h-6">
            <button class="flex items-center gap-1 pr-2">
                <svg class="size-4" viewBox="0 0 16 16"><path d="M2 6q3-5 9-3M5 14q6 0 9-5" fill="none" stroke="#888" stroke-width="2"/><circle cx="12" cy="3.500" r="2.800" fill="#333"/><circle cx="3.500" cy="12.500" r="2.800" fill="#333"/></svg>
                <span class="flex items-center">Gestur<svg class="w-2 h-1" viewBox="0 0 8 4"><path d="M0 0h8L4 4z"/></svg></span>
            </button>
            <p class="flex items-center h-full px-1 border-x border-[#d0d1cf]">110,36 mm x 72,43 mm</p>
            <svg class="self-end ml-2 size-[9px]" viewBox="0 0 9 9" fill="#b9bab8"><path d="M6 0h2v2H6zM6 3h2v2H6zM3 3h2v2H3zM6 6h2v2H6zM3 6h2v2H3zM0 6h2v2H0z"/></svg>
        </div>
    </footer>

    <script>
        // Shade the curved face as thin strips running from the top arc to the bottom arc
        const top4 = [[896, 264], [925, 262], [958, 246], [966, 222]];
        const bottom4 = [[774, 645], [835, 658], [918, 648], [925, 604]];
        const tones = [[0, 188], [0.25, 180], [0.5, 143], [0.65, 112], [0.77, 80], [0.88, 52], [1, 28]];

        function bezier(p, t) {
            const u = 1 - t;
            return [0, 1].map(i => u * u * u * p[0][i] + 3 * u * u * t * p[1][i] + 3 * u * t * t * p[2][i] + t * t * t * p[3][i]);
        }

        function tone(t) {
            const i = Math.max(1, tones.findIndex(s => s[0] >= t));
            const [a, b] = [tones[i - 1], tones[i]];
            return Math.round(a[1] + (b[1] - a[1]) * (t - a[0]) / (b[0] - a[0]));
        }

        const side = document.getElementById('side');
        const steps = 160;
        for (let i = 0; i < steps; i++) {
            const t0 = i / steps, t1 = Math.min(1, (i + 3) / steps);
            const strip = document.createElementNS('http://www.w3.org/2000/svg', 'polygon');
            strip.setAttribute('points', [bezier(top4, t0), bezier(top4, t1), bezier(bottom4, t1), bezier(bottom4, t0)].join(' '));
            const v = tone(t0);
            strip.setAttribute('fill', `rgb(${v},${v + 2},${v - 1})`);
            side.appendChild(strip);
        }
    </script>
</body>
</html>
